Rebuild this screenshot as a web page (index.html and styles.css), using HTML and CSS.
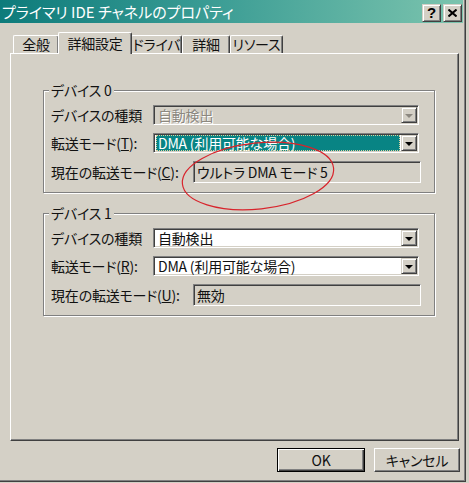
FILE: index.html
```html
<!DOCTYPE html>
<html lang="ja">
  <head>
    <meta charset="UTF-8" />
    <title>プライマリ IDE チャネルのプロパティ</title>
    <link rel="stylesheet" href="styles.css">
  </head>
  <body>
    <div class="window">
      <div class="titlebar">
        <span class="title">プライマリ IDE チャネルのプロパティ</span>
        <div class="caption-buttons">
          <span class="cap-btn help">?</span>
          <span class="cap-btn close">
            <svg width="9" height="8" viewBox="0 0 9 8"><path d="M0.5 0.5 L8.5 7.5 M8.5 0.5 L0.5 7.5" stroke="#000" stroke-width="2"/></svg>
          </span>
        </div>
      </div>

      <div class="tabs">
        <span class="tab w1">全般</span>
        <span class="tab active">詳細設定</span>
        <span class="tab w3">ドライバ</span>
        <span class="tab w4">詳細</span>
        <span class="tab w5">リソース</span>
      </div>

      <div class="panel">
        <fieldset class="group">
          <legend>デバイス 0</legend>
          <div class="row">
            <span class="label">デバイスの種類</span>
            <div class="combo disabled">
              <span class="value">自動検出</span>
              <span class="drop"><i class="arrow"></i></span>
            </div>
          </div>
          <div class="row">
            <span class="label">転送モード(<u>T</u>):</span>
            <div class="combo">
              <span class="value selected">DMA (利用可能な場合)</span>
              <span class="drop"><i class="arrow"></i></span>
            </div>
          </div>
          <div class="row">
            <span class="label wide">現在の転送モード(<u>C</u>):</span>
            <div class="field">ウルトラ DMA モード 5</div>
          </div>
        </fieldset>

        <fieldset class="group second">
          <legend>デバイス 1</legend>
          <div class="row">
            <span class="label">デバイスの種類</span>
            <div class="combo">
              <span class="value">自動検出</span>
              <span class="drop"><i class="arrow"></i></span>
            </div>
          </div>
          <div class="row">
            <span class="label">転送モード(<u>R</u>):</span>
            <div class="combo">
              <span class="value">DMA (利用可能な場合)</span>
              <span class="drop"><i class="arrow"></i></span>
            </div>
          </div>
          <div class="row">
            <span class="label wide">現在の転送モード(<u>U</u>):</span>
            <div class="field">無効</div>
          </div>
        </fieldset>
      </div>

      <div class="buttons">
        <span class="btn default">OK</span>
        <span class="btn">キャンセル</span>
      </div>
    </div>

    <!-- 赤い丸 (手書きの印) -->
    <svg class="mark" width="469" height="483" viewBox="0 0 469 483">
      <ellipse cx="258" cy="176" rx="76" ry="33" transform="rotate(-6 258 176)" fill="none" stroke="#d8242c" stroke-width="1.2"/>
    </svg>
  </body>
</html>
```

FILE: styles.css
```css
* {
  box-sizing: border-box;
}

body {
  margin: 0;
  padding: 0;
  background-color: #d4d0c6;
  font-family: "Noto Sans CJK JP", sans-serif;
  font-size: 14px;
  font-feature-settings: "palt";
  letter-spacing: -0.2px;
  color: #111;
}

.window {
  width: 466px;
  height: 482px;
  border-right: 1px solid #404040;
  border-bottom: 1px solid #404040;
  box-shadow: inset -1px -1px 0 #808080;
  display: flex;
  flex-direction: column;
}

/* タイトルバー */
.titlebar {
  height: 23px;
  margin-right: 2px;
  background: linear-gradient(to right, #0d7b7b, #3a9c94 45%, #7cc4ae);
  display: flex;
  justify-content: space-between;
}

.title {
  color: #fff;
  font-size: 15px;
  line-height: 23px;
  padding-left: 2px;
  letter-spacing: 0;
  white-space: nowrap;
}

.caption-buttons {
  display: flex;
  gap: 2px;
  margin-top: 4px;
  padding-right: 1px;
}

.cap-btn {
  width: 19px;
  height: 18px;
  background-color: #d4d0c6;
  border: 1px solid;
  border-color: #d4d0c6 #404040 #404040 #d4d0c6;
  box-shadow: inset 1px 1px 0 #fff, inset -1px -1px 0 #808080;
  display: flex;
  align-items: center;
  justify-content: center;
}

.help {
  font-family: "Liberation Sans", sans-serif;
  font-weight: bold;
  font-size: 15px;
  line-height: 16px;
  color: #000;
}

/* タブ */
.tabs {
  height: 30px;
  padding-left: 13px;
  display: flex;
  align-items: flex-end;
}

.tab {
  height: 18px;
  line-height: 17px;
  text-align: center;
  white-space: nowrap;
  border-top: 1px solid #fff;
  border-left: 1px solid #fff;
  border-right: 1px solid #404040;
  border-radius: 2px 2px 0 0;
  box-shadow: inset -1px 0 0 #808080;
}

.w1 { width: 46px; }
.w3 { width: 51px; }
.w4 { width: 48px; }
.w5 { width: 53px; }

.active {
  width: 74px;
  height: 22px;
  margin: 0 -1px -1px -1px;
  line-height: 20px;
  position: relative;
  z-index: 1;
  background-color: #d4d0c6;
}

/* タブの中身 */
.panel {
  width: 449px;
  height: 388px;
  margin-left: 10px;
  padding: 29px 0 0 32px;
  border: 1px solid;
  border-color: #fff #404040 #404040 #fff;
  box-shadow: inset -1px -1px 0 #808080;
}

.group {
  width: 392px;
  margin: 0;
  padding: 7px 0 9px 7px;
  border: 1px solid #808080;
  box-shadow: inset 1px 1px 0 #fff, 1px 1px 0 #fff;
  display: flex;
  flex-direction: column;
  gap: 8px;
}

.second {
  margin-top: 13px;
}

.group legend {
  padding: 0 2px;
  margin-left: -2px;
  line-height: 15px;
  background-color: #d4d0c6;
}

.row {
  display: flex;
  align-items: center;
}

.label {
  width: 102px;
  white-space: nowrap;
}

.label.wide {
  width: 142px;
}

.combo {
  width: 266px;
  height: 20px;
  background-color: #fff;
  border: 1px solid;
  border-color: #808080 #fff #fff #808080;
  box-shadow: inset 1px 1px 0 #404040, inset -1px -1px 0 #d4d0c6;
  padding: 1px;
  display: flex;
}

.combo .value {
  flex: 1;
  padding-left: 3px;
  line-height: 16px;
  white-space: nowrap;
}

.combo .selected {
  margin: 0 1px;
  padding-left: 2px;
  background-color: #088484;
  color: #fff;
  outline: 1px dotted #d8d0a0;
  outline-offset: -1px;
}

.combo.disabled {
  background-color: #d4d0c6;
  color: #8c8880;
  text-shadow: 1px 1px 0 #fff;
}

.drop {
  width: 16px;
  height: 16px;
  background-color: #d4d0c6;
  border: 1px solid;
  border-color: #d4d0c6 #404040 #404040 #d4d0c6;
  box-shadow: inset 1px 1px 0 #fff, inset -1px -1px 0 #808080;
  display: flex;
  align-items: center;
  justify-content: center;
}

.arrow {
  width: 0;
  height: 0;
  border-left: 4px solid transparent;
  border-right: 4px solid transparent;
  border-top: 4px solid #000;
  margin-top: 1px;
}

.disabled .arrow {
  border-top-color: #8c8880;
}

.field {
  width: 228px;
  height: 22px;
  border: 1px solid;
  border-color: #808080 #fff #fff #808080;
  box-shadow: inset 1px 1px 0 #404040, inset -1px -1px 0 #d4d0c6;
  padding-left: 3px;
  line-height: 20px;
  white-space: nowrap;
}

/* 下のボタン */
.buttons {
  margin-top: 7px;
  padding-right: 5px;
  display: flex;
  justify-content: flex-end;
  gap: 9px;
}

.btn {
  width: 86px;
  height: 24px;
  line-height: 22px;
  text-align: center;
  border: 1px solid;
  border-color: #fff #404040 #404040 #fff;
  box-shadow: inset -1px -1px 0 #808080;
}

.btn.default {
  width: 88px;
  border: 1px solid #000;
  box-shadow: inset 1px 1px 0 #fff, inset -1px -1px 0 #404040, inset -2px -2px 0 #808080;
}

.mark {
  position: absolute;
  top: 0;
  left: 0;
  pointer-events: none;
}
```
